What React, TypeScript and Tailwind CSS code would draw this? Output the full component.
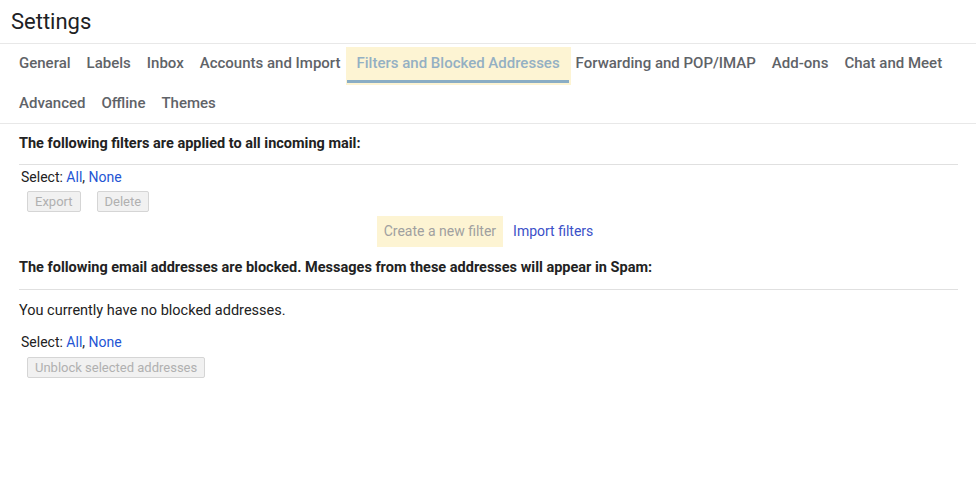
import React from "react";

const tabsRow1 = [
  "General",
  "Labels",
  "Inbox",
  "Accounts and Import",
  "Filters and Blocked Addresses",
  "Forwarding and POP/IMAP",
  "Add-ons",
  "Chat and Meet",
];
const tabsRow2 = ["Advanced", "Offline", "Themes"];

function Tab({ label }: { label: string }) {
  const selected = label === "Filters and Blocked Addresses";
  if (selected) {
    return (
      <div className="relative mx-[-3px] flex h-[38px] items-center bg-[#fdf4d3] px-[11px] pb-[6px]">
        <span className="text-[#94b0c3]">{label}</span>
        <div className="absolute bottom-[2px] left-[1px] right-[2px] h-[3px] bg-[#8aadc4]" />
      </div>
    );
  }
  return (
    <div className="flex h-[38px] items-center px-[8px] pb-[6px] text-[#5f6368]">{label}</div>
  );
}

function Btn({ label }: { label: string }) {
  return (
    <div className="flex h-[21px] items-center rounded-[2px] border border-[#d5d5d5] bg-[#f1f1f1] px-[7px] text-[13px] text-[#b0b0b0]">
      {label}
    </div>
  );
}

function SelectLine() {
  return (
    <div className="pl-[2px] text-[14px] leading-[20px] text-[#222]">
      Select: <span className="text-[#2455d4]">All</span>,{" "}
      <span className="text-[#2455d4]">None</span>
    </div>
  );
}

export default function App() {
  return (
    <div
      className="h-[503px] w-[976px] bg-white"
      style={{ fontFamily: "Roboto, 'Liberation Sans', sans-serif" }}
    >
      <div className="flex h-[43px] items-center pl-[11px] pb-[1px] text-[22px] text-[#202124]">
        Settings
      </div>
      <div className="border-t border-b border-[#e8e8e8] px-[11px] pt-[3px] pb-[2px] text-[15px] font-medium">
        <div className="flex">
          {tabsRow1.map((t) => (
            <Tab key={t} label={t} />
          ))}
        </div>
        <div className="flex h-[36px]">
          {tabsRow2.map((t) => (
            <div key={t} className="flex h-[36px] items-center px-[8px] text-[#5f6368]">
              {t}
            </div>
          ))}
        </div>
      </div>
      <div className="px-[19px] pr-[18px] text-[14.5px] text-[#222]">
        <div className="flex h-[41px] items-center border-b border-[#e0e0e0] font-bold">
          The following filters are applied to all incoming mail:
        </div>
        <div className="pt-[2px]">
          <SelectLine />
        </div>
        <div className="mt-[4px] flex gap-[16px] pl-[8px]">
          <Btn label="Export" />
          <Btn label="Delete" />
        </div>
        <div className="mt-[4px] flex items-center justify-center pr-[7px]">
          <div className="flex h-[31px] items-center bg-[#fdf4d3] px-[7px] text-[14px] text-[#a0a0a0]">
            Create a new filter
          </div>
          <div className="ml-[10px] text-[14px] text-[#3a50c8]">Import filters</div>
        </div>
        <div className="flex h-[43px] items-center border-b border-[#e0e0e0] font-bold">
          The following email addresses are blocked. Messages from these addresses will appear in Spam:
        </div>
        <div className="flex h-[42px] items-center">You currently have no blocked addresses.</div>
        <div>
          <SelectLine />
        </div>
        <div className="mt-[5px] flex pl-[8px]">
          <Btn label="Unblock selected addresses" />
        </div>
      </div>
    </div>
  );
}
